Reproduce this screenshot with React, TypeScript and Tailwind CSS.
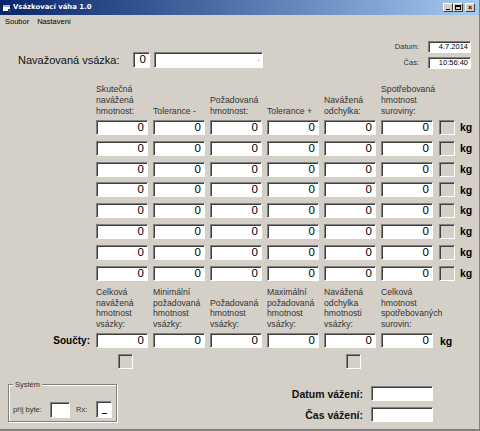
import React from "react";

const sunken =
  "border border-t-[#808080] border-l-[#808080] border-r-[#ffffff] border-b-[#ffffff] shadow-[inset_1px_1px_0_#404040]";

function NumBox() {
  return (
    <div
      className={`${sunken} w-[52px] h-[15px] bg-white flex items-center justify-end pr-[3px] text-[11.5px] leading-[13px] text-black`}
    >
      0
    </div>
  );
}

function GrayBox() {
  return <div className={`${sunken} w-[16px] h-[15px] bg-[#d4d0c8]`} />;
}

const topHeaders: string[][] = [
  ["Skutečná", "navážená", "hmotnost:"],
  ["Tolerance -"],
  ["Požadovaná", "hmotnost:"],
  ["Tolerance +"],
  ["Navážená", "odchylka:"],
  ["Spotřebovaná", "hmotnost", "suroviny:"],
];

const bottomHeaders: string[][] = [
  ["Celková", "navážená", "hmotnost", "vsázky:"],
  ["Minimální", "požadovaná", "hmotnost", "vsázky:"],
  ["Požadovaná", "hmotnost", "vsázky:"],
  ["Maximální", "požadovaná", "hmotnost", "vsázky:"],
  ["Navážená", "odchylka", "hmotnosti", "vsázky:"],
  ["Celková", "hmotnost", "spotřebovaných", "surovin:"],
];

function WinBtn({ children }: { children: React.ReactNode }) {
  return (
    <div className="w-[10px] h-[9px] bg-[#d4d0c8] border border-t-white border-l-white border-r-[#404040] border-b-[#404040] flex items-center justify-center text-[7px] leading-none text-black font-bold">
      {children}
    </div>
  );
}

export default function App() {
  const rows = [0, 1, 2, 3, 4, 5, 6, 7];
  return (
    <div className="w-[480px] h-[431px] bg-[#d4d0c8] flex flex-col overflow-hidden border-r border-r-[#808080] border-b-[2px] border-b-[#808080] font-['Liberation_Sans',Arial,sans-serif] text-[#222]">
      {/* Title bar */}
      <div className="h-[15px] flex items-center bg-linear-to-r from-[#0a246a] to-[#a6caf0] pl-[3px] pr-[4px] shrink-0">
        <svg width="8" height="8" viewBox="0 0 8 8" className="shrink-0">
          <rect x="0" y="1" width="7" height="6" fill="#ffffff" />
          <rect x="0" y="1" width="7" height="2" fill="#9db9eb" />
          <rect x="5" y="5" width="3" height="3" fill="#404040" />
        </svg>
        <span className="ml-[2px] text-white font-bold text-[6.9px] leading-none font-['DejaVu_Sans',Verdana,sans-serif]">
          Vsázkovací váha 1.0
        </span>
        <div className="ml-auto flex items-center">
          <WinBtn>
            <span className="block w-[4px] h-[1.5px] bg-black mt-[4px]" />
          </WinBtn>
          <WinBtn>
            <span className="block w-[6px] h-[5px] border border-black border-t-2" />
          </WinBtn>
          <div className="ml-[2px]">
            <WinBtn>×</WinBtn>
          </div>
        </div>
      </div>

      {/* Menu */}
      <div className="h-[14px] flex items-center pl-[5px] text-[7.5px] leading-none text-black shrink-0">
        <span>Soubor</span>
        <span className="ml-[8px]">Nastavení</span>
      </div>

      {/* Top section */}
      <div className="h-[55px] flex shrink-0">
        <div className="pl-[18px] pt-[23px] flex items-start">
          <div className="w-[115px] h-[16px] flex items-center text-[11px] leading-none text-[#111]">
            Navažovaná vsázka:
          </div>
          <div
            className={`${sunken} w-[17px] h-[16px] bg-white flex items-center justify-end pr-[3px] text-[11.5px] leading-none text-black`}
          >
            0
          </div>
          <div
            className={`${sunken} ml-[4px] w-[109px] h-[16px] bg-white flex items-center justify-end pr-[2px] text-[8px] leading-none text-[#888]`}
          >
            -
          </div>
        </div>
        <div className="ml-auto pt-[12px] pr-[8px] flex flex-col gap-[4px]">
          <div className="flex items-center justify-end">
            <span className="text-[7.5px] leading-none mr-[9px] text-[#333]">Datum:</span>
            <div
              className={`${sunken} w-[43px] h-[12px] bg-white flex items-center justify-end pr-[2px] text-[7.5px] leading-none text-black`}
            >
              4.7.2014
            </div>
          </div>
          <div className="flex items-center justify-end">
            <span className="text-[7.5px] leading-none mr-[9px] text-[#333]">Čas:</span>
            <div
              className={`${sunken} w-[43px] h-[12px] bg-white flex items-center justify-end pr-[2px] text-[7.5px] leading-none text-black`}
            >
              10:56:40
            </div>
          </div>
        </div>
      </div>

      {/* Column headers */}
      <div className="h-[33px] flex pl-[96px] gap-[5px] shrink-0">
        {topHeaders.map((lines, i) => (
          <div
            key={i}
            className="w-[52px] flex flex-col justify-end text-[8.7px] leading-[11px] text-[#333] whitespace-nowrap"
          >
            {lines.map((l, j) => (
              <span key={j}>{l}</span>
            ))}
          </div>
        ))}
      </div>

      {/* Rows */}
      <div className="mt-[3px] flex flex-col gap-[5.8px] shrink-0">
        {rows.map((r) => (
          <div key={r} className="h-[15px] flex items-center pl-[96px]">
            <div className="flex gap-[5px]">
              {[0, 1, 2, 3, 4, 5].map((c) => (
                <NumBox key={c} />
              ))}
            </div>
            <div className="ml-[6px]">
              <GrayBox />
            </div>
            <span className="ml-[5px] text-[10.5px] font-bold leading-none text-black">kg</span>
          </div>
        ))}
      </div>

      {/* Bottom headers */}
      <div className="mt-[7px] h-[41.5px] flex pl-[96px] gap-[5px] shrink-0">
        {bottomHeaders.map((lines, i) => (
          <div
            key={i}
            className="w-[52px] flex flex-col justify-end text-[8.7px] leading-[10.4px] text-[#333] whitespace-nowrap"
          >
            {lines.map((l, j) => (
              <span key={j}>{l}</span>
            ))}
          </div>
        ))}
      </div>

      {/* Součty */}
      <div className="mt-[4.3px] h-[15px] flex items-center shrink-0">
        <div className="w-[96px] pr-[6px] text-right text-[10px] font-bold leading-none text-black">
          Součty:
        </div>
        <div className="flex gap-[5px]">
          {[0, 1, 2, 3, 4, 5].map((c) => (
            <NumBox key={c} />
          ))}
        </div>
        <span className="ml-[7px] text-[10.5px] font-bold leading-none text-black">kg</span>
      </div>

      {/* small boxes */}
      <div className="mt-[6px] h-[15px] flex pl-[118px] shrink-0">
        <div className={`${sunken} w-[15px] h-[15px] bg-[#d4d0c8]`} />
        <div className={`${sunken} ml-[213px] w-[15px] h-[15px] bg-[#d4d0c8]`} />
      </div>

      {/* Bottom section */}
      <div className="mt-[15px] flex shrink-0">
        <div className="ml-[8px] relative w-[109px] h-[38px] border border-[#808080] shadow-[1px_1px_0_#ffffff,inset_1px_1px_0_#ffffff]">
          <span className="absolute -top-[5px] left-[4px] px-[2px] bg-[#d4d0c8] text-[7.5px] leading-[9px] text-[#333]">
            Systém
          </span>
          <div className="absolute left-[4px] top-[16px] flex items-center">
            <span className="text-[7.5px] leading-none text-[#333] w-[37px]">příj byte:</span>
            <div className={`${sunken} w-[20px] h-[16px] bg-white`} />
            <span className="ml-[6px] text-[7.5px] leading-none text-[#333] w-[20px]">Rx:</span>
            <div
              className={`${sunken} w-[16px] h-[17px] bg-white flex items-end justify-center pb-[3px]`}
            >
              <span className="block w-[5px] h-[1.5px] bg-black" />
            </div>
          </div>
        </div>
        <div className="ml-auto mr-[46px] pt-[2px] flex flex-col gap-[6px]">
          <div className="flex items-center justify-end">
            <span className="text-[10.5px] font-bold leading-none text-[#111] mr-[8px]">
              Datum vážení:
            </span>
            <div className={`${sunken} w-[62px] h-[15px] bg-white`} />
          </div>
          <div className="flex items-center justify-end">
            <span className="text-[10.5px] font-bold leading-none text-[#111] mr-[8px]">
              Čas vážení:
            </span>
            <div className={`${sunken} w-[62px] h-[15px] bg-white`} />
          </div>
        </div>
      </div>
    </div>
  );
}
